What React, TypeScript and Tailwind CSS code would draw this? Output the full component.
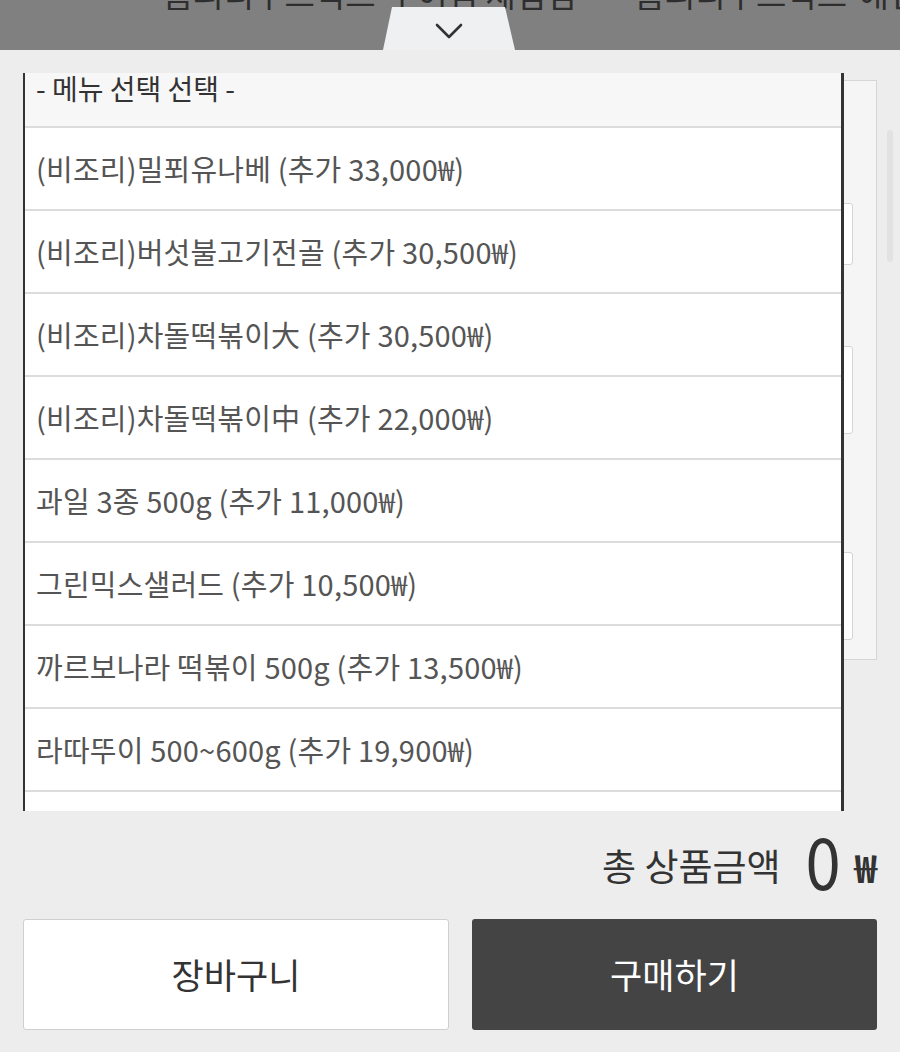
import React from "react";

const items = [
  "(비조리)밀푀유나베 (추가 33,000₩)",
  "(비조리)버섯불고기전골 (추가 30,500₩)",
  "(비조리)차돌떡볶이大 (추가 30,500₩)",
  "(비조리)차돌떡볶이中 (추가 22,000₩)",
  "과일 3종 500g (추가 11,000₩)",
  "그린믹스샐러드 (추가 10,500₩)",
  "까르보나라 떡볶이 500g (추가 13,500₩)",
  "라따뚜이 500~600g (추가 19,900₩)",
  "",
];

const font = { fontFamily: '"Noto Sans CJK KR", "Noto Sans", sans-serif' };

export default function App() {
  return (
    <div
      className="w-[900px] h-[1052px] bg-[#ededed] overflow-hidden flex flex-col"
      style={font}
    >
      {/* top header bar with the store tabs, partly scrolled away */}
      <div className="relative h-[50px] bg-[#808080] overflow-hidden shrink-0">
        <div className="flex gap-[58px] pl-[163px] mt-[-27px] text-[33px] leading-[40px] text-[#2e2e2e] whitespace-nowrap">
          <span>홈피디우드릭스-부여점 체험점</span>
          <span>홈피디우드릭스-애견카페</span>
        </div>
        {/* collapse handle */}
        <div className="absolute left-[383px] top-[7px] w-[132px] h-[43px] bg-[#eff0f2] [clip-path:polygon(9px_0,122px_0,132px_100%,0_100%)] flex justify-center pt-[16px]">
          <svg width="28" height="16" viewBox="0 0 28 16" fill="none">
            <polyline
              points="2,2 14,14 26,2"
              stroke="#333"
              strokeWidth="2.6"
              strokeLinecap="round"
              strokeLinejoin="round"
            />
          </svg>
        </div>
      </div>

      {/* option area */}
      <div className="relative h-[770px] shrink-0">
        <div className="ml-[23px] mt-[30px] w-[854px] h-[580px] bg-[#f5f5f5] border border-[#d6d6d6] flex flex-col items-end pr-[23px]">
          <div className="mt-[122px] w-[300px] h-[62px] bg-white border border-[#d4d4d4] rounded-[3px]" />
          <div className="mt-[81px] w-[300px] h-[88px] bg-white border border-[#d4d4d4] rounded-[3px]" />
          <div className="mt-[118px] w-[300px] h-[88px] bg-white border border-[#d4d4d4] rounded-[3px]" />
        </div>
        {/* page scrollbar */}
        <div className="absolute left-[887px] top-[80px] w-[6px] h-[132px] rounded-full bg-[#e2e2e2]" />

        {/* open select list */}
        <div className="absolute left-[23px] top-[23px] w-[821px] h-[738px] bg-white border-l-2 border-r-[3px] border-[#333] overflow-hidden">
          <div className="h-[55px] bg-[#f7f7f7] border-b-2 border-[#dcdcdc] pl-[11px] text-[28px] leading-[30px] text-[#333] whitespace-nowrap">
            - 메뉴 선택 선택 -
          </div>
          {items.map((t, i) => (
            <div
              key={i}
              className="h-[83px] shrink-0 border-b-2 border-[#dcdcdc] flex items-center pl-[11px] text-[29px] tracking-[0.2px] text-[#555] whitespace-nowrap"
            >
              {t}
            </div>
          ))}
        </div>
      </div>

      {/* total */}
      <div className="h-[99px] flex justify-end items-center pr-[23px] text-[#333] shrink-0">
        <span className="text-[37px] leading-none mt-[-8px]">총 상품금액</span>
        <span className="ml-[22px] text-[72px] leading-none mt-[-22px] scale-x-[0.88]">0</span>
        <span className="ml-[12px] text-[38px] leading-none font-bold mt-[-6px]">₩</span>
      </div>

      {/* actions */}
      <div className="flex gap-[23px] px-[23px]">
        <button className="w-[426px] h-[111px] bg-white border border-[#cfcfcf] rounded-[3px] text-[35px] text-[#333]">
          장바구니
        </button>
        <button className="w-[405px] h-[111px] bg-[#444] rounded-[3px] text-[35px] text-white">
          구매하기
        </button>
      </div>
    </div>
  );
}
